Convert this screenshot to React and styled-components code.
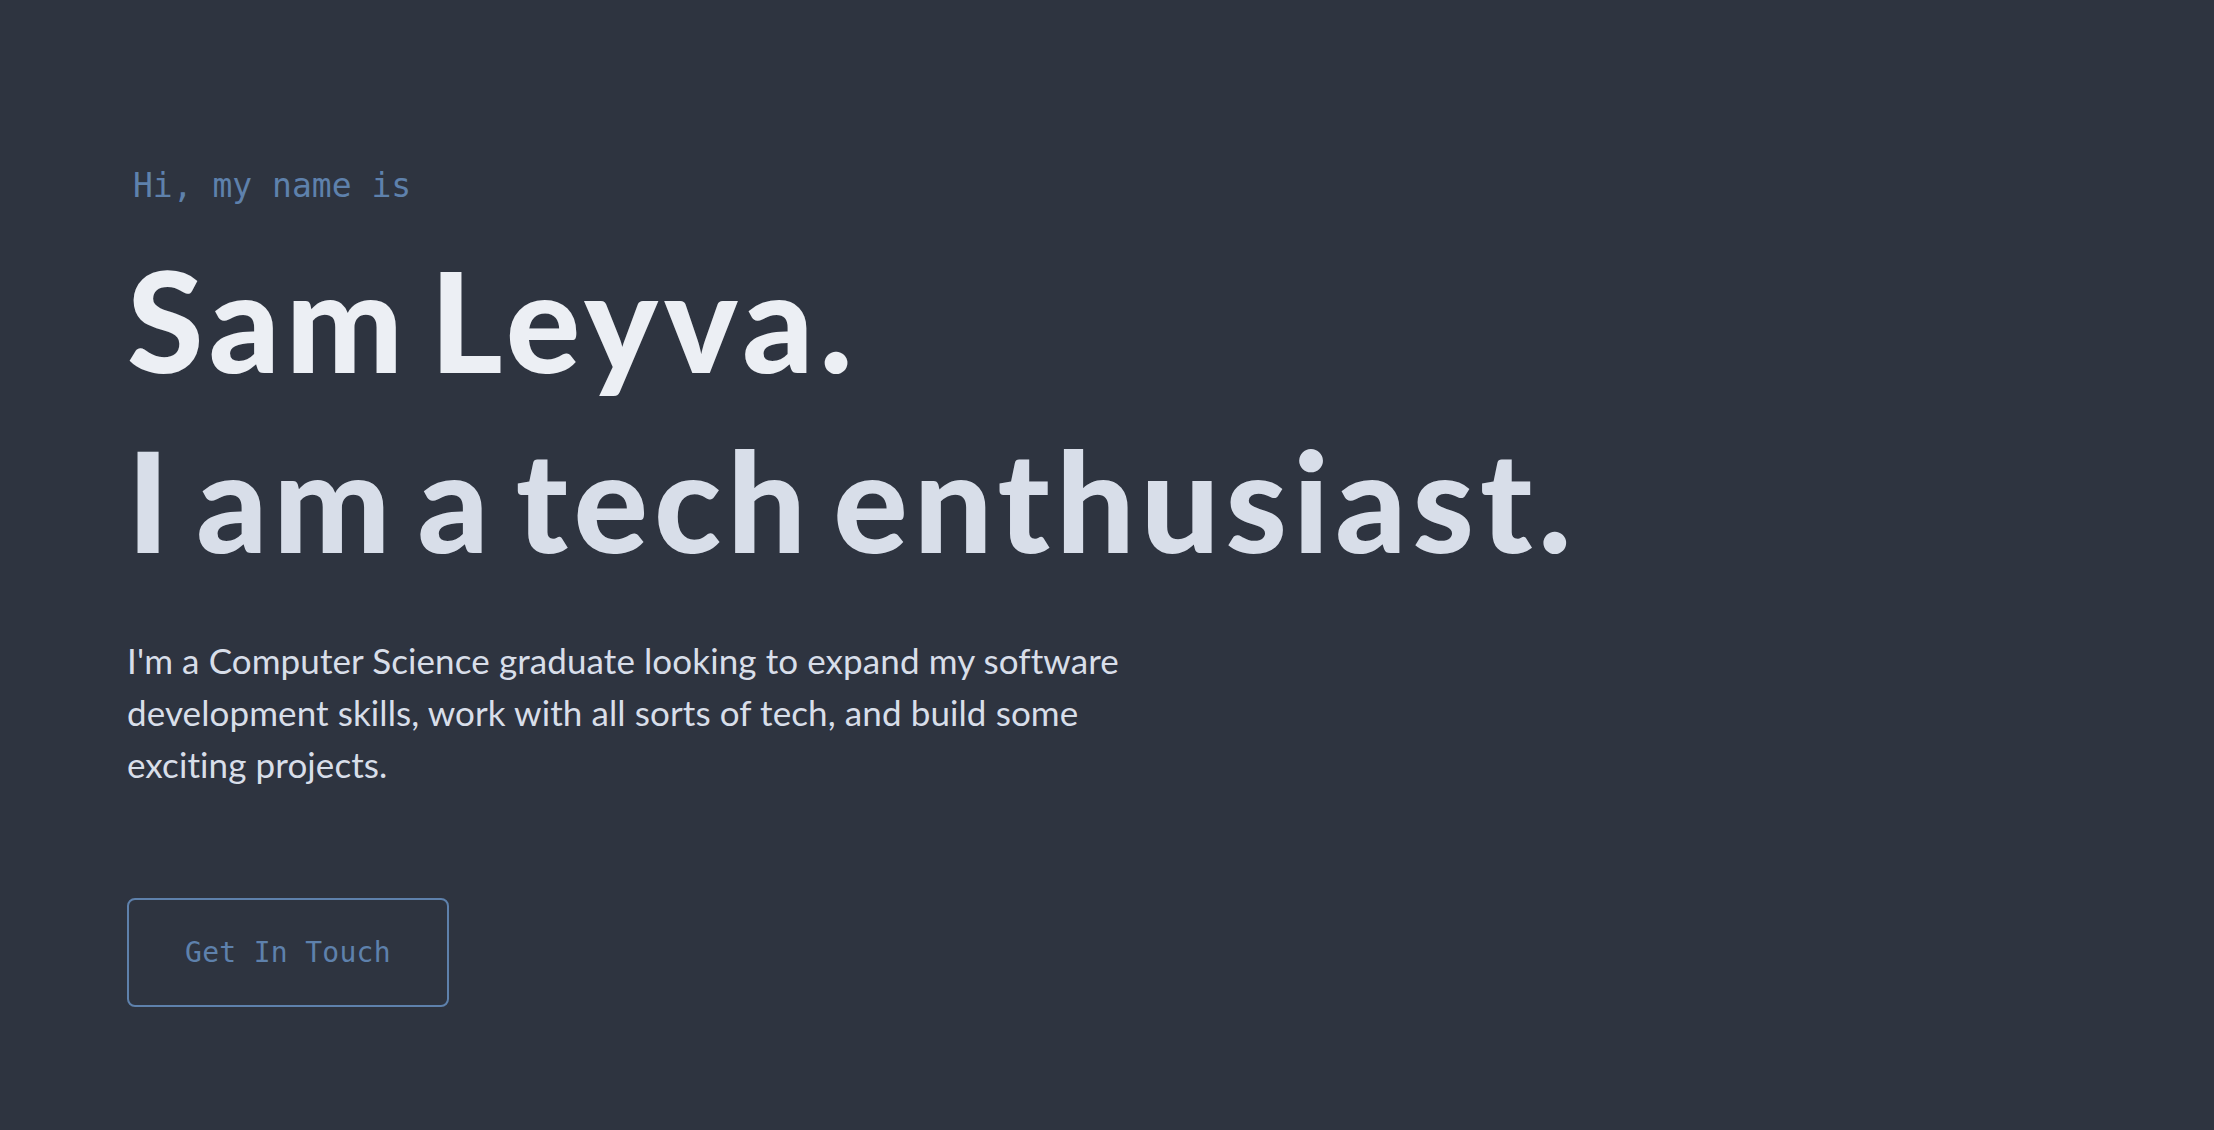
import React from 'react';
import styled, { createGlobalStyle } from 'styled-components';

const GlobalStyle = createGlobalStyle`
  html, body {
    margin: 0;
    padding: 0;
    background-color: #2E3440;
  }
  * {
    box-sizing: border-box;
  }
`;

const Hero = styled.section`
  min-height: 100vh;
  padding: 166px 127px 0;
  display: flex;
  flex-direction: column;
  align-items: flex-start;
  background-color: #2E3440;
`;

const Intro = styled.h1`
  margin: 0 0 0 6px;
  font-family: "DejaVu Sans Mono", "Liberation Mono", monospace;
  font-weight: 400;
  font-size: 33px;
  line-height: 40px;
  color: #5E81AC;
`;

const BigHeading = styled.h2`
  margin: ${({ $gap }) => $gap}px 0 0;
  font-family: Lato, "Open Sans", sans-serif;
  font-weight: 900;
  font-size: 139px;
  line-height: 138px;
  letter-spacing: 6px;
  word-spacing: -18px;
  color: ${({ $tone }) => $tone};
`;

const Blurb = styled.p`
  margin: 65px 0 0;
  max-width: 1060px;
  font-family: Lato, "Open Sans", sans-serif;
  font-weight: 400;
  font-size: 35px;
  line-height: 52px;
  letter-spacing: 0.1px;
  color: #D8DEE9;
`;

const ContactButton = styled.a`
  margin-top: 108px;
  width: 322px;
  height: 109px;
  display: flex;
  align-items: center;
  justify-content: center;
  border: 2px solid #5E81AC;
  border-radius: 8px;
  font-family: "DejaVu Sans Mono", "Liberation Mono", monospace;
  font-size: 28px;
  letter-spacing: 0.3px;
  color: #5E81AC;
  text-decoration: none;
  cursor: pointer;
`;

function App() {
  return (
    <>
      <GlobalStyle />
      <Hero>
        <Intro>Hi, my name is</Intro>
        <BigHeading $gap={45} $tone="#ECEFF4">Sam Leyva.</BigHeading>
        <BigHeading $gap={42} $tone="#D8DEE9">I am a tech enthusiast.</BigHeading>
        <Blurb>
          I'm a Computer Science graduate looking to expand my software
          development skills, work with all sorts of tech, and build some
          exciting projects.
        </Blurb>
        <ContactButton href="#contact">Get In Touch</ContactButton>
      </Hero>
    </>
  );
}

export default App;
